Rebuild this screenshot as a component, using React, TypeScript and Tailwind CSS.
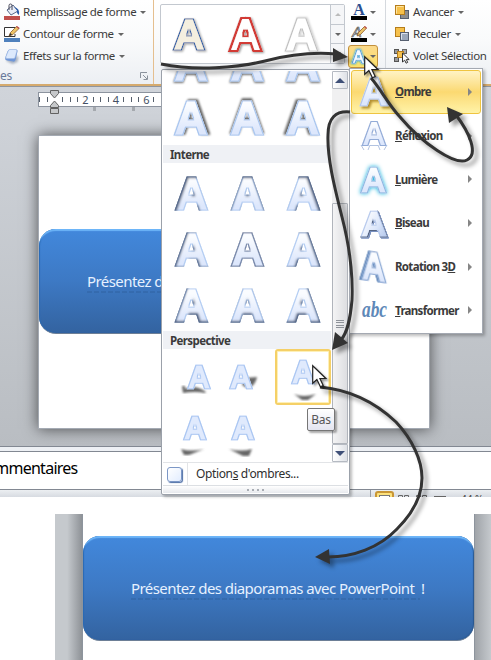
import React from 'react';

const UI = "font-['Noto_Sans','Open_Sans',sans-serif]";

function Defs() {
  const dirs: [string, number, number][] = [
    ['tl', 1.8, 1.8], ['t', 0, 2.1], ['tr', -1.8, 1.8],
    ['l', 2.1, 0], ['c', 0, 0], ['r', -2.1, 0],
    ['bl', 1.8, -1.8], ['b', 0, -2.1], ['br', -1.8, -1.8],
  ];
  return (
    <svg className="absolute h-0 w-0">
      <defs>
        <linearGradient id="face" x1="0" y1="0" x2="0" y2="1">
          <stop offset="0.25" stopColor="#fafcff" />
          <stop offset="0.75" stopColor="#dde7fc" />
        </linearGradient>
        <linearGradient id="bevel" x1="0" y1="0" x2="1" y2="1">
          <stop offset="0.2" stopColor="#fff" />
          <stop offset="0.6" stopColor="#dbe6fa" />
          <stop offset="1" stopColor="#a9bfe8" />
        </linearGradient>
        {dirs.map(([id, dx, dy]) => (
          <filter key={id} id={'in-' + id} x="-10%" y="-10%" width="120%" height="120%">
            <feOffset in="SourceAlpha" dx={dx} dy={dy} result="o" />
            <feGaussianBlur in="o" stdDeviation="1" result="b" />
            <feFlood floodColor="#3f4f70" floodOpacity="0.9" />
            <feComposite in2="b" operator="out" />
            <feComposite in2="SourceAlpha" operator="in" result="s" />
            <feMerge>
              <feMergeNode in="SourceGraphic" />
              <feMergeNode in="s" />
            </feMerge>
          </filter>
        ))}
        <filter id="blur1"><feGaussianBlur stdDeviation="1" /></filter>
      </defs>
    </svg>
  );
}

type AProps = { fill?: string; stroke?: string; sw?: number; bold?: number; filter?: string; cls?: string };
/* WordArt sample letter: the face is thickened by its stroke, and the filter colours the outer ring. */
function BigA({ fill = 'url(#face)', stroke = '#a8c6ef', sw = 1.2, bold = 1.8, filter, cls = 'h-[38px] w-[38px]' }: AProps) {
  const ring = 'ring' + stroke.slice(1) + Math.round(sw * 10);
  return (
    <svg viewBox="0 0 38 38" className={cls + ' shrink-0 overflow-visible'}>
      <defs>
        <filter id={ring} x="-10%" y="-10%" width="120%" height="120%">
          <feMorphology in="SourceAlpha" operator="erode" radius={sw * 0.55} result="core" />
          <feFlood floodColor={stroke} />
          <feComposite in2="core" operator="out" />
          <feComposite in2="SourceAlpha" operator="in" result="ring" />
          <feMerge><feMergeNode in="SourceGraphic" /><feMergeNode in="ring" /></feMerge>
        </filter>
      </defs>
      <g filter={filter}>
        <text x="19" y="35" textAnchor="middle" fontFamily="Liberation Sans, sans-serif" fontWeight="700" fontSize="45.5"
          fill={fill} stroke={fill} strokeWidth={bold + sw} filter={'url(#' + ring + ')'}>A</text>
      </g>
    </svg>
  );
}

function Caret() {
  return <span className="h-0 w-0 border-x-[3px] border-t-[3px] border-x-transparent border-t-[#666]" />;
}

function RibbonRow({ icon, label, caret = true }: { icon: React.ReactNode; label: string; caret?: boolean }) {
  return (
    <div className="flex h-[22px] items-center whitespace-nowrap">
      <span className="mr-[3px] flex h-4 w-4 shrink-0 items-center">{icon}</span>
      <span className="text-[11.5px] leading-[16px] tracking-[-0.38px] text-[#3b3b3b]">{label}</span>
      {caret && <span className="ml-[4px] flex"><Caret /></span>}
    </div>
  );
}

const BucketIcon = (
  <svg viewBox="0 0 16 16" className="h-4 w-4 overflow-visible">
    <path d="M3 6 L9 1 L14 7 L7 11 Z" fill="#e9eef8" stroke="#5b6b8c" />
    <path d="M5 6V1.5a1.5 1.5 0 0 1 3 0V6" fill="none" stroke="#4a4a5a" />
    <path d="M10 3 Q16 4 15 11 Q12 9 13 6Z" fill="#2b5dab" />
    <rect x="0" y="12" width="16" height="4" fill="#c0504d" />
  </svg>
);
const OutlineIcon = (
  <svg viewBox="0 0 16 16" className="h-4 w-4 overflow-visible">
    <path d="M11 1.5H.5V10.500H11V8" fill="#fff" stroke="#333" />
    <path d="M5 10l1.500-3.500L12.500.5l2.500 2L9 8.500z" fill="#edc468" stroke="#8a5a28" strokeWidth=".8" />
    <path d="M5 10l1.300-3 1.700 1.700z" fill="#333" />
    <path d="M12 1l1-1 2.700 2-1 1z" fill="#c0504d" />
    <rect x="0" y="12" width="16" height="4" fill="#4f81bd" />
  </svg>
);
const EffectIcon = (
  <svg viewBox="0 0 16 16" className="h-4 w-4 overflow-visible">
    <path d="M4 5.500L14.500 9l-1 5-5 2-6-3z" fill="#7a879d" opacity=".6" filter="url(#blur1)" />
    <path d="M3.500 3.500Q4 1.500 6 1.500h6q2 0 1.500 2l-2 8.500q-.5 2-2.500 1.600L3 12.500Q.8 12 1.200 10z" fill="#6f97d8" />
    <path d="M4 3.500Q4.500 1.500 6 1.500h5.500q1.800 0 1.300 1.800L11 9.500q-.4 1.300-2 1H3Q1.500 10.500 1.800 9z" fill="#dce9fc" stroke="#9fb9e2" strokeWidth=".6" />
  </svg>
);

function LayerIcon({ front }: { front: boolean }) {
  const y = <rect x="1.500" y="1.500" width="9" height="9" fill="#f6c14c" stroke="#b57d1b" />;
  const g = <rect x="6.500" y="6.500" width="8" height="8" fill={front ? '#8d8d8d' : '#9aa7ba'} stroke="#555f70" />;
  return <svg viewBox="0 0 16 16" className="h-4 w-4">{front ? <>{g}{y}<path d="M2.500 9.500V2.500H9.500" stroke="#ffe4a0" fill="none" /></> : <>{y}{g}<path d="M7.500 13.500V7.500h6" stroke="#dbe2ec" fill="none" /></>}</svg>;
}
const PaneIcon = (
  <svg viewBox="0 0 16 16" className="h-4 w-4">
    <rect x=".5" y="1.500" width="4" height="4" fill="#9a9a9a" stroke="#555" />
    <rect x="8.500" y="1.500" width="4" height="4" fill="#aaa" stroke="#666" />
    <rect x=".5" y="9.500" width="4" height="4" fill="#9a9a9a" stroke="#555" />
    <rect x="3.500" y="3.500" width="6" height="6" fill="#f6c14c" stroke="#b57d1b" />
    <path d="M8.500 5v9l2.200-1.800 1.400 3 1.600-.8-1.400-2.800h2.900z" fill="#fff" stroke="#333" />
  </svg>
);

function Pointer() {
  return (
    <svg viewBox="0 0 15 23" className="h-[23px] w-[15px] overflow-visible drop-shadow-[2px_2px_1px_#0006]">
      <path d="M.7.700V18.300l4.200-3.800 3.500 7.300 2.800-1.300-3.300-7h6z" fill="#fff" stroke="#222" strokeWidth="1.200" />
    </svg>
  );
}

function Ribbon() {
  return (
    <div className="flex h-[84px] shrink-0 bg-gradient-to-b from-white via-[#f9fafb] to-[#eceff3]">
      <div className="flex w-[154px] shrink-0 flex-col border-r border-[#e5bf8f]">
        <div className="mt-px pl-1">
          <RibbonRow icon={BucketIcon} label="Remplissage de forme" />
          <RibbonRow icon={OutlineIcon} label="Contour de forme" />
          <RibbonRow icon={EffectIcon} label="Effets sur la forme" />
        </div>
        <div className="flex h-[17px] items-center justify-between pr-[5px]">
          <span className="-ml-[11px] text-[12px] leading-[16px] tracking-[-0.2px] text-[#68799a]">mes</span>
          <svg viewBox="0 0 8 8" className="mt-px h-2 w-2"><path d="M.5 6V.5H7M3 3l4 4M7.500 3.500v4h-4" fill="none" stroke="#8b929c" /></svg>
        </div>
      </div>
      <div className="ml-[6px] mt-1 flex h-[60px] w-[185px] shrink-0 rounded-[2px] border border-[#c3c8cf] bg-white">
        <div className="flex w-[169px] items-center">
          <div className="flex w-14 justify-center"><BigA fill="#f4efe0" stroke="#2f62a8" sw={2} bold={1.2} cls="h-[36px] w-[36px] drop-shadow-[1px_1px_1px_#0005]" /></div>
          <div className="flex w-14 justify-center"><BigA fill="#fff" stroke="#d23a36" sw={3.8} bold={0.4} cls="h-[37px] w-[37px] drop-shadow-[1px_1px_1px_#0006]" /></div>
          <div className="flex w-14 justify-center"><BigA fill="#fff" stroke="#c0c0c0" sw={1.2} cls="h-[37px] w-[37px] drop-shadow-[1px_0px_1px_#0003]" /></div>
        </div>
        <div className="flex flex-1 flex-col divide-y divide-[#c3c8cf] border-l border-[#c3c8cf] bg-[#f5f6f8]">
          <span className="flex flex-1 items-center justify-center"><span className="border-x-[3px] border-b-[3px] border-x-transparent border-b-[#bbb]" /></span>
          <span className="flex flex-1 items-center justify-center"><Caret /></span>
          <span className="flex flex-1 items-center justify-center"><Caret /></span>
        </div>
      </div>
      <div className="ml-[3px] w-[32px] pt-px">
        <div className="flex h-[22px] items-center gap-[3px] pl-[3px]">
          <svg viewBox="0 0 16 16" className="h-4 w-4 shrink-0 overflow-visible"><text x="8" y="11" textAnchor="middle" fontFamily="Liberation Serif, serif" fontWeight="700" fontSize="16" fill="#2c4f91">A</text><rect y="12" width="16" height="4" /></svg>
          <Caret />
        </div>
        <div className="flex h-[22px] items-center gap-[3px] pl-[3px]">
          <svg viewBox="0 0 16 16" className="h-4 w-4 shrink-0 overflow-visible"><text x="6" y="11" textAnchor="middle" fontFamily="Liberation Sans, sans-serif" fontStyle="italic" fontSize="14" fill="#fff" stroke="#555" strokeWidth=".7">A</text><path d="M6 10l1.500-3.500L13.500.5l2 1.700L9.500 8.500z" fill="#edc468" stroke="#8a5a28" strokeWidth=".8" /><path d="M13 1l1-1 2 1.700-1 1z" fill="#c0504d" /><rect y="12" width="16" height="4" /></svg>
          <Caret />
        </div>
        <div className="flex h-[23px] w-[30px] items-center gap-[4px] rounded-[3px] border border-[#c2903c] bg-gradient-to-b from-[#fbd98a] to-[#fce26c] pl-[2px]">
          <BigA cls="h-[15px] w-[15px] drop-shadow-[0_0_1px_#10a9d8]" stroke="#5fa8d8" sw={3.6} bold={0.5} fill="#f4faff" />
          <Caret />
        </div>
      </div>
      <div className="ml-[5px] border-l border-[#d5d9de] pl-2 pt-px">
        <RibbonRow icon={<LayerIcon front />} label="Avancer" />
        <RibbonRow icon={<LayerIcon front={false} />} label="Reculer" />
        <RibbonRow icon={PaneIcon} label="Volet Sélection" caret={false} />
      </div>
    </div>
  );
}

function BlueShape() {
  return (
    <div className="flex h-[105px] w-[391px] items-center rounded-[17px] border-b border-[#6d7f96] bg-gradient-to-b from-[#4288dc] via-[#3d79c4] via-50% to-[#3363a0] pl-12 shadow-[inset_0_3px_1px_-1px_#6db5f8,inset_-1px_0_1px_#2a588f,inset_1px_0_1px_#2a6ab5]">
      <div className="mt-[2px] whitespace-nowrap text-[15px] leading-[20px] text-[#e6f1ff]">
        <div className="tracking-[-0.57px]">Présentez des diaporamas avec PowerPoint&nbsp; !</div>
        <div className="mr-1 h-[2px] bg-[repeating-linear-gradient(90deg,#27558d_0_5px,transparent_5px_7px)] opacity-30" />
      </div>
    </div>
  );
}

function Ruler() {
  return (
    <div className="relative ml-[38px] mt-[5px] h-[15px] w-[140px] border border-[#8c939e] bg-white text-[11px] leading-[13px] text-[#445064]">
      <div className="-ml-[3px] flex h-[13px] items-center">
        {['', '', '', '', '', '', '2', '', '', '', '4', '', '', '', '6', '', ''].map((t, i) => (
          <span key={i} className="flex w-[7.620px] shrink-0 justify-center">
            {i === 2 ? null : t || <i className="h-[5px] w-px bg-[#555f6c]" />}
          </span>
        ))}
      </div>
      <svg viewBox="0 0 10 25" className="absolute -top-[3px] left-[11px] h-[25px] w-[10px] overflow-visible">
        <path d="M.5.5h8v3l-4 4.500-4-4.500zM4.500 11l4 4.500v2h-8v-2zM.5 18.500h8v5h-8z" fill="#c6c8ca" stroke="#626262" />
      </svg>
      <span className="absolute left-[54px] top-[14px] h-1 w-[3px] bg-[#a5a9ae]" />
      <span className="absolute left-[93px] top-[14px] h-1 w-[3px] bg-[#a5a9ae]" />
    </div>
  );
}

const innerKinds = ['url(#in-tl)', 'url(#in-t)', 'url(#in-tr)', 'url(#in-l)', 'url(#in-c)', 'url(#in-r)', 'url(#in-bl)', 'url(#in-b)', 'url(#in-br)'];

function SectionTitle({ children }: { children: string }) {
  return <div className="flex h-[18px] shrink-0 items-center bg-[#eff1f5] pl-[7px] pt-px text-[11.5px] font-bold tracking-[-0.6px] text-[#3b3b3b]">{children}</div>;
}

function Persp({ cls, shadow, on = false }: { cls: string; shadow: string; on?: boolean }) {
  return (
    <div className={'relative h-14 w-14 ' + (on ? 'rounded-[3px] border-2 border-[#f5d067] bg-white shadow-[inset_0_0_0_1px_#fdf0b8]' : '')}>
      <svg viewBox="0 0 56 56" className={'absolute h-14 w-14 overflow-visible ' + (on ? '-left-[2px] -top-[2px]' : 'left-0 top-0')}>
        <path d={shadow} fill="#666" filter="url(#blur1)" />
      </svg>
      <div className={'absolute ' + cls}><BigA cls="h-[26px] w-[26px]" stroke="#a9c6f2" sw={1.8} fill="#e0eafd" /></div>
    </div>
  );
}

function Gallery() {
  return (
    <div className="absolute left-[161px] top-[69px] flex h-[426px] w-[189px] flex-col rounded-[2px] border border-[#9ba1aa] bg-white p-px shadow-[2px_2px_3px_#0004]">
      <div className="flex h-[391px] shrink-0">
        <div className="flex w-[168px] shrink-0 flex-col overflow-hidden">
          <div className="flex h-[19px] shrink-0 items-end overflow-hidden">
            {[0, 1, 2].map((i) => (
              <div key={i} className="flex w-14 justify-center pb-[7px]"><BigA cls="h-[38px] w-[38px] drop-shadow-[0_1px_1px_#0009]" /></div>
            ))}
          </div>
          <div className="flex h-[55px] shrink-0 items-center">
            {['drop-shadow-[2px_-1px_1px_#0009]', 'drop-shadow-[0_-2px_1px_#0009]', 'drop-shadow-[-2px_-1px_1px_#0009]'].map((s) => (
              <div key={s} className="flex w-14 justify-center"><BigA cls={'h-[38px] w-[38px] ' + s} /></div>
            ))}
          </div>
          <SectionTitle>Interne</SectionTitle>
          <div className="grid h-[168px] shrink-0 grid-cols-3 pt-[2px]">
            {innerKinds.map((k) => (
              <div key={k} className="flex h-14 items-center justify-center"><BigA filter={k} stroke={k === 'url(#in-c)' ? '#8294b8' : '#b4cef3'} cls="h-[37px] w-[37px]" /></div>
            ))}
          </div>
          <SectionTitle>Perspective</SectionTitle>
          <div className="grid h-[113px] shrink-0 grid-cols-3">
            <Persp cls="left-[23px] top-[15px]" shadow="M19 37h3v3q10-5 21 3l-1 1q-9-2-22 0z" />
            <Persp cls="left-[9px] top-[15px]" shadow="M26 29l12-1q-2 10-10 11l-5-3z" />
            <Persp cls="left-[13px] top-[8px]" shadow="M19 45q9 4 22 0l-8 6h-6z" on />
            <Persp cls="left-[19px] top-[9px]" shadow="M18 43q10 3 23 0l-15 6h-5z" />
            <Persp cls="left-[11px] top-[9px]" shadow="M10 43q12 3 23 0l-3 7h-6z" />
            <span />
          </div>
        </div>
        <div className="ml-px flex w-4 flex-col bg-[#f0f0f1]">
          <span className="flex h-[18px] items-center justify-center rounded-[1px] border border-[#b5bac2] bg-gradient-to-r from-white to-[#dfe2e7]"><span className="border-x-[5px] border-b-[5px] border-x-transparent border-b-[#3f5078]" /></span>
          <span className="h-[114px]" />
          <span className="flex h-[241px] items-center justify-center rounded-[1px] border border-[#b0b4bb] bg-gradient-to-r from-[#f4f4f5] to-[#dddee1]"><span className="h-[8px] w-[8px] bg-[repeating-linear-gradient(#8e9299_0_1px,transparent_1px_2.5px)]" /></span>
          <span className="flex h-[18px] items-center justify-center rounded-[1px] border border-[#b5bac2] bg-gradient-to-r from-white to-[#dfe2e7]"><span className="border-x-[5px] border-t-[5px] border-x-transparent border-t-[#3f5078]" /></span>
        </div>
      </div>
      <div className="flex h-[23px] shrink-0 items-center border-t border-[#e2e4e7]">
        <span className="flex h-full w-[25px] items-center border-r border-[#e2e4e7] pl-1"><i className="h-[15px] w-[15px] rounded-[3px] border border-[#7c97c6] bg-gradient-to-br from-white to-[#e2edff] shadow-[1px_1px_1px_#4d6ea6]" /></span>
        <span className="ml-2 whitespace-nowrap text-[12px] tracking-[-0.37px] text-[#2f2f2f]">Option<u>s</u> d'ombres...</span>
      </div>
      <div className="flex flex-1 items-center justify-center gap-[3px] border-t border-[#dcdfe3] bg-gradient-to-b from-white to-[#e7e9ed]">
        {[0, 1, 2, 3].map((i) => <i key={i} className="h-[2px] w-[2px] bg-[#a9adb4]" />)}
      </div>
    </div>
  );
}

function MenuRow({ icon, children, on = false }: { icon: React.ReactNode; children: React.ReactNode; on?: boolean }) {
  return (
    <div className={'flex h-11 items-center rounded-[3px] border ' + (on ? 'border-[#efc440] bg-gradient-to-b from-[#fff3c4] via-[#fbd971] via-50% to-[#fff3a8]' : 'border-transparent')}>
      <span className="flex w-[43px] shrink-0 items-center justify-center">{icon}</span>
      <span className="flex-1 whitespace-nowrap text-[11.5px] font-bold tracking-[-0.68px] text-[#3b3b3b]">{children}</span>
      <span className="mr-[8px] border-y-[4px] border-l-[4px] border-y-transparent border-l-[#868686]" />
    </div>
  );
}

const ReflectA = (
  <span className="flex h-[38px] flex-col items-center pt-[2px]">
    <BigA cls="h-[28px] w-[28px]" stroke="#93acd8" sw={1.8} bold={0.8} />
    <svg viewBox="0 0 28 6" className="-mt-[2px] h-[6px] w-[28px]"><path d="M1 0l3 5M10 0L8 5M10 .5h8M18 0l2 5M27 0l-3 5" stroke="#9fb4da" fill="none" opacity=".8" /></svg>
  </span>
);

function SubMenu() {
  return (
    <div className="absolute left-[349px] top-[68px] flex h-[266px] w-[134px] flex-col border border-[#a4a9b2] bg-white p-px shadow-[2px_2px_3px_#0004]">
      <MenuRow on icon={<BigA cls="h-[32px] w-[32px] drop-shadow-[2px_2px_1px_#b39030]" stroke="#b3c6ea" />}><u>O</u>mbre</MenuRow>
      <MenuRow icon={ReflectA}><u>R</u>éflexion</MenuRow>
      <MenuRow icon={<BigA cls="h-[29px] w-[29px] drop-shadow-[0_0_2px_#19b4df]" stroke="#8fb9e2" sw={1.8} />}><u>L</u>umière</MenuRow>
      <MenuRow icon={<BigA cls="h-[30px] w-[30px] drop-shadow-[1px_1px_0px_#7890c0]" fill="url(#bevel)" filter="url(#in-br)" stroke="#b7caed" />}><u>B</u>iseau</MenuRow>
      <MenuRow icon={<div className="[transform:skewY(8deg)_scaleX(.85)]"><BigA cls="h-[32px] w-[32px] drop-shadow-[-2px_0_0_#5c83b8]" stroke="#83a4d1" sw={1.8} /></div>}>Rotation 3<u>D</u></MenuRow>
      <MenuRow icon={<svg viewBox="0 0 28 22" className="h-[22px] w-[28px] overflow-visible"><text x="2" y="14" textLength="25" lengthAdjust="spacingAndGlyphs" transform="scale(1 1.3)" fontFamily="Liberation Serif, serif" fontStyle="italic" fontWeight="700" fontSize="18" fill="#5e88b8">abc</text></svg>}><u>T</u>ransformer</MenuRow>
    </div>
  );
}

function Arrows() {
  return (
    <svg viewBox="0 0 491 660" className="pointer-events-none absolute left-0 top-0 h-[660px] w-[491px] drop-shadow-[4px_4px_2px_#0006]">
      <g fill="none" stroke="#333" strokeWidth="3">
        <path d="M161 64C195 71 237 68 265 61C292 54 313 52 336 54" />
        <path d="M371 78C380 88 388 104 400 117C422 143 455 166 467 160C479 154 469 132 456 115" />
        <path d="M350 112Q328 110 328 135C327 158 335 189 342 217C350 248 353 276 352 300C350 322 347 333 341 340" />
        <path d="M320 387C353 390 377 404 396 422C412 439 422 460 422 478C422 499 411 515 397 529C379 548 353 557 328 557" />
      </g>
      <g fill="#333">
        <path d="M333 48L348 57L333 62Z" />
        <path d="M447 107L463 114L449 123Z" />
        <path d="M332 350L335 332L348 343Z" />
        <path d="M315 557L329 549L330 564Z" />
      </g>
    </svg>
  );
}

export default function App() {
  return (
    <div className={'relative flex h-[660px] w-[491px] flex-col overflow-hidden bg-white ' + UI}>
      <Defs />
      <Ribbon />
      <div className="h-[3px] shrink-0 border-b border-[#8f959e] bg-[#d5aa6d]" />
      <div className="flex h-[359px] shrink-0 flex-col overflow-hidden bg-gradient-to-b from-[#d0d4da] to-[#b9bdc2]">
        <Ruler />
        <div className="ml-[38px] mt-[28px] flex h-[294px] w-[392px] flex-col border border-[#a4aab3] bg-white pt-[93px] shadow-[0_0_14px_#0009]">
          <BlueShape />
        </div>
      </div>
      <div className="h-[6px] shrink-0 border-y border-[#828892] bg-[#edf0f4]" />
      <div className="flex h-[37px] shrink-0 items-center bg-white">
        <span className="-ml-[24px] -mt-[6px] text-[16px] leading-[20px] tracking-[-0.75px] text-black">Commentaires</span>
      </div>
      <div className="flex h-[8px] shrink-0 items-start overflow-hidden border-t border-[#828892] bg-gradient-to-b from-[#eceff2] to-[#d7dbe1] pl-[370px]">
        <span className="h-2 border-l border-[#989da6]" />
        <span className="ml-1 mt-px h-3 w-[19px] rounded-[3px] border-2 border-[#c99635] bg-[#fce17c] px-[2px] pt-[2px]"><i className="block h-3 border border-[#777] bg-white" /></span>
        <svg viewBox="0 0 54 3" className="ml-1 mt-[5px] h-[3px] w-[54px]"><path d="M.5 3V.5h4V3M6.500 3V.5h4V3M18.500 3V.5h4V3M24.500 3V.5h4V3M36 1.500h12" fill="none" stroke="#666" /></svg>
        <span className="ml-[9px] mt-[3px] text-[10px] leading-[12px] text-[#444]">44 %</span>
      </div>
      <div className="h-[17px] shrink-0 bg-white" />
      <div className="ml-[55px] flex h-[146px] shrink-0">
        <div className="w-[28px] border-r border-[#8d949d] bg-[linear-gradient(to_right,#c5c9cd_45%,#8e9297)]" />
        <div className="w-[391px] pt-[22px]"><BlueShape /></div>
        <div className="flex-1 border-l border-[#8d949d] bg-[linear-gradient(to_right,#a0a4a9,#c5c9cd)]" />
      </div>
      <Gallery />
      <SubMenu />
      <Arrows />
      <div className="absolute left-[364px] top-[56px]"><Pointer /></div>
      <div className="absolute left-[312px] top-[365px]"><Pointer /></div>
      <div className="absolute left-[307px] top-[408px] flex h-[23px] w-[28px] items-center justify-center rounded-[2px] border border-[#767676] bg-gradient-to-b from-white to-[#e4e5f0] text-[12px] tracking-[-0.2px] text-[#555] shadow-[2px_2px_2px_#0005]">Bas</div>
    </div>
  );
}
